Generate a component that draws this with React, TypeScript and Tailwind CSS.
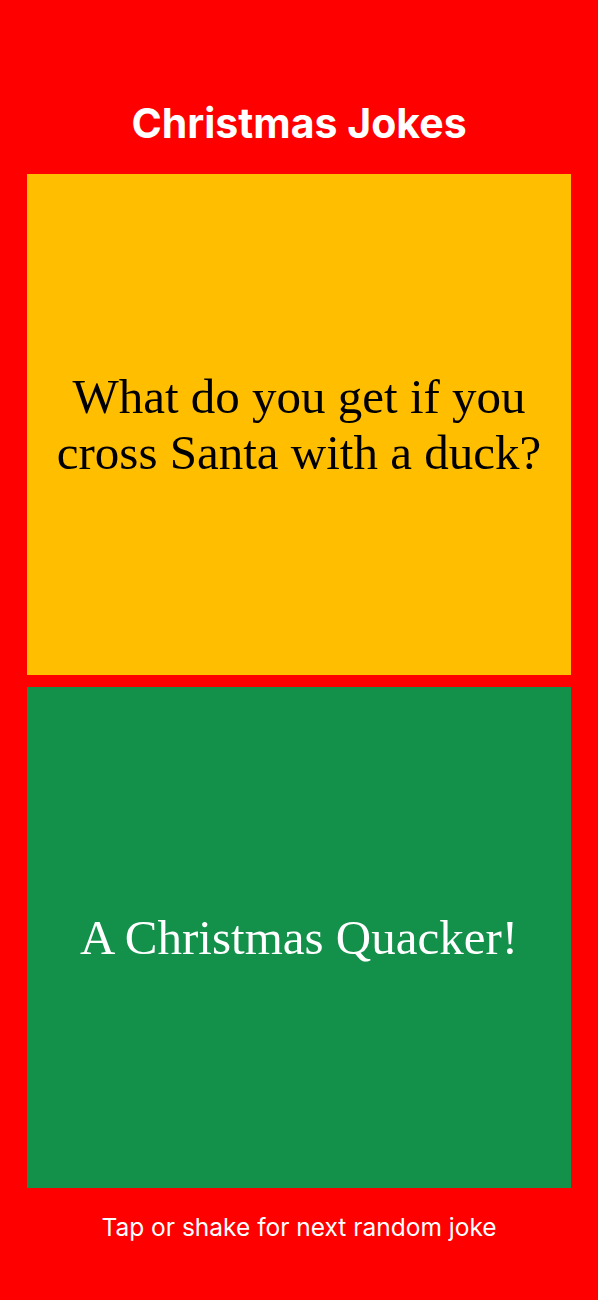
import React from "react";

export default function App() {
  return (
    <div className="flex h-[1300px] w-full flex-col bg-[#ff0000] px-[27px]">
      <header className="flex h-[174px] items-end justify-center pb-[30px]">
        <h1 className="text-[41px] font-bold leading-none text-white [font-family:Inter,'Noto_Sans',sans-serif]">
          Christmas Jokes
        </h1>
      </header>
      <section className="flex h-[501px] items-center justify-center bg-[#ffbe00] px-6">
        <p className="text-center text-[49px] leading-[56px] text-black [font-family:'Liberation_Serif','Times_New_Roman',serif]">
          What do you get if you cross Santa with a duck?
        </p>
      </section>
      <div className="h-[12px]" />
      <section className="flex h-[501px] items-center justify-center bg-[#13904a] px-6">
        <p className="text-center text-[49px] leading-[56px] text-white [font-family:'Liberation_Serif','Times_New_Roman',serif]">
          A Christmas Quacker!
        </p>
      </section>
      <footer className="flex h-[78px] items-center justify-center">
        <p className="text-[24.5px] text-white [font-family:Inter,'Noto_Sans',sans-serif]">
          Tap or shake for next random joke
        </p>
      </footer>
    </div>
  );
}
